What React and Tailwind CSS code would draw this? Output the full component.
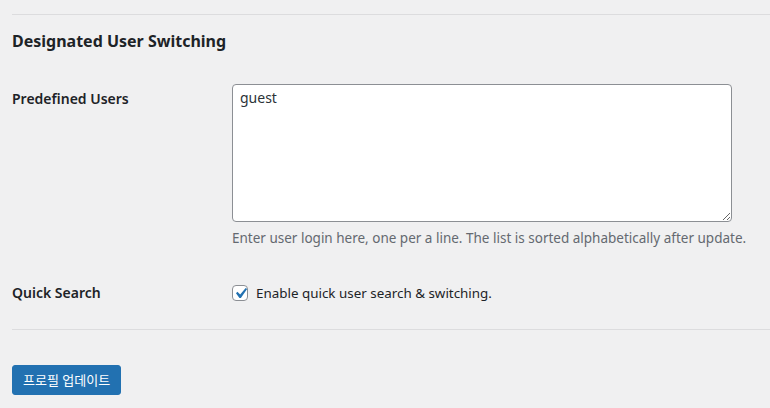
export default function App() {
  return (
    <div className="min-h-screen w-full bg-[#f0f0f1] text-[#1d2327] font-['Noto_Sans','Noto_Sans_CJK_KR',sans-serif] overflow-hidden">
      <div className="pl-[12px] pt-[14px]">
        <div className="h-px bg-[#dcdcde]" />
        <h2 className="mt-[15px] h-[22px] text-[16px] leading-[22px] font-bold">Designated User Switching</h2>
        <div className="mt-[32px] flex">
          <div className="w-[220px] pt-[6px] text-[14px] leading-[18px] font-semibold">Predefined Users</div>
          <div className="flex flex-col">
            <textarea
              defaultValue="guest"
              className="w-[500px] h-[138px] rounded-[4px] border border-[#8c8f94] bg-white px-[7px] py-[3px] text-[14px] leading-[20px] text-[#2c3338] outline-none"
            />
            <p className="mt-[6px] text-[13.5px] leading-[20px] text-[#646970]">
              Enter user login here, one per a line. The list is sorted alphabetically after update.
            </p>
          </div>
        </div>
        <div className="mt-[35px] flex items-center">
          <div className="w-[220px] text-[14px] leading-[18px] font-semibold">Quick Search</div>
          <label className="flex items-center gap-[8px] text-[13.4px] leading-[20px] text-[#1d2327]">
            <span className="flex h-[16px] w-[16px] items-center justify-center rounded-[4px] border border-[#8c8f94] bg-white overflow-visible">
              <svg viewBox="3 3 14 14" className="h-[15px] w-[15px] shrink-0">
                <path d="M14.83 4.89l1.34.94-5.81 8.38H9.02L5.78 9.67l1.34-1.25 2.57 2.4z" fill="#2271b1" />
              </svg>
            </span>
            Enable quick user search &amp; switching.
          </label>
        </div>
        <div className="mt-[26px] h-px bg-[#dcdcde]" />
        <button className="mt-[35px] h-[30px] rounded-[3px] bg-[#2271b1] px-[10px] text-[13px] leading-[28px] text-white border border-[#2271b1]">
          프로필 업데이트
        </button>
      </div>
    </div>
  );
}
